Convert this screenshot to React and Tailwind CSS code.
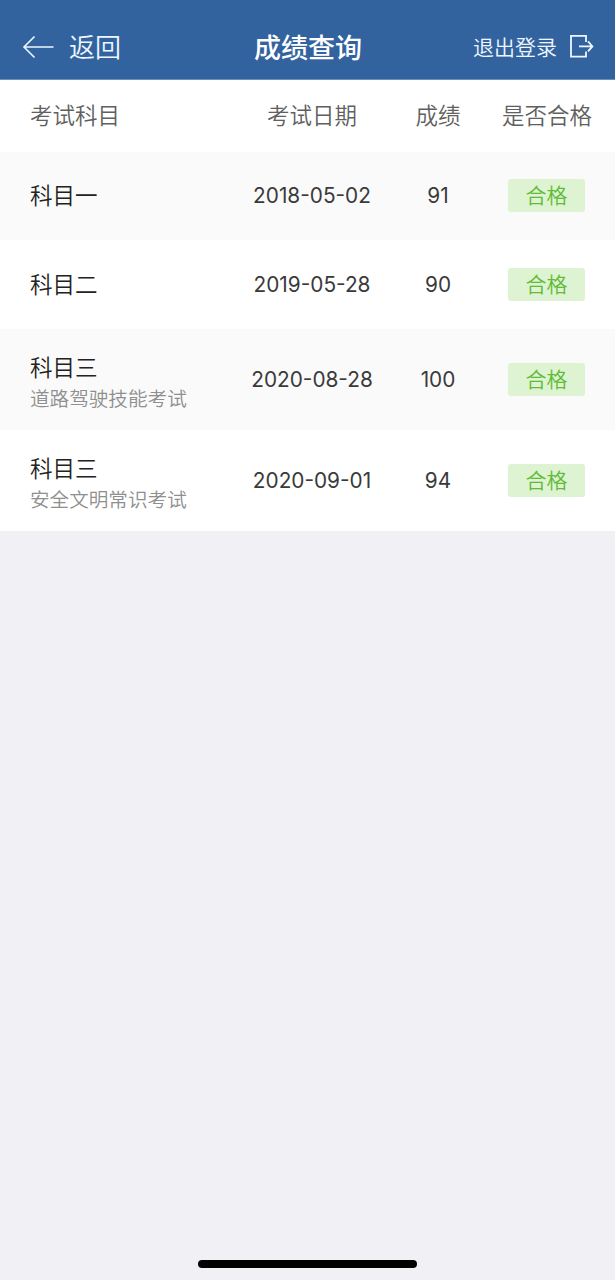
const results = [
  { subject: '科目一', date: '2018-05-02', score: 91 },
  { subject: '科目二', date: '2019-05-28', score: 90 },
  { subject: '科目三', detail: '道路驾驶技能考试', date: '2020-08-28', score: 100 },
  { subject: '科目三', detail: '安全文明常识考试', date: '2020-09-01', score: 94 },
];

function BackIcon() {
  return (
    <svg width="32" height="24" viewBox="0 0 32 24" fill="none" stroke="currentColor" strokeWidth="1.6">
      <path d="M12.5 1.5 2 12l10.5 10.5M2 12h29.5" />
    </svg>
  );
}

function LogoutIcon() {
  return (
    <svg width="25" height="24" viewBox="0 0 25 24" fill="none" stroke="currentColor" strokeWidth="1.8">
      <path d="M17 7V.9H2v20.7h15v-5.1" />
      <path d="M10 11.4h13M19 6.4l4.4 5-4.4 5" />
    </svg>
  );
}

export default function App() {
  return (
    <div className="min-h-screen bg-white">
      <div className="w-[615px] h-screen flex flex-col bg-[#f1f0f5] font-['Inter','Noto_Sans_CJK_SC',sans-serif]">
        <header className="h-[80px] shrink-0 pt-[14px] pl-[22px] pr-[21px] grid grid-cols-[1fr_auto_1fr] items-center bg-[#33639f] border-b border-[#6c90bd] text-[#eef7ff]">
          <button className="flex items-center gap-[15px] text-[26px] leading-none font-[350]">
            <BackIcon />
            <span className="pt-[3px]">返回</span>
          </button>
          <h1 className="pt-[3px] text-[27px] leading-none font-medium text-white">成绩查询</h1>
          <button className="flex items-center justify-end gap-[12px] text-[21px] leading-none font-[350]">
            <span className="pt-px">退出登录</span>
            <LogoutIcon />
          </button>
        </header>

        <main className="text-[22.5px] leading-none font-[350]">
          <div className="h-[71.5px] pt-px grid grid-cols-[236px_152px_100px_117px] items-center text-center text-[#606060] bg-white">
            <span className="pl-[30px] text-left">考试科目</span>
            <span>考试日期</span>
            <span>成绩</span>
            <span className="-mr-px">是否合格</span>
          </div>
          {results.map((r) => (
            <div
              key={r.date}
              className={`${r.detail ? 'h-[101px]' : 'h-[88.75px]'} grid grid-cols-[236px_152px_100px_117px] items-center text-center text-[#3a3a3a] odd:bg-white even:bg-[#fafafa]`}
            >
              <div className={`${r.detail ? 'pt-[8px]' : 'pt-px'} pl-[30px] text-left text-[#222]`}>
                <p>{r.subject}</p>
                {r.detail && <p className="mt-[10px] text-[19.6px] text-[#8f8f8f]">{r.detail}</p>}
              </div>
              <span className="pt-[2px] text-[20.8px] font-normal">{r.date}</span>
              <span className="pt-[2px] text-[20.8px] font-normal">{r.score}</span>
              <span className="w-[77px] h-[33px] mx-auto flex items-center justify-center rounded-[3px] bg-[#def3d1] text-[21px] text-[#5fbb38]">
                合格
              </span>
            </div>
          ))}
        </main>

        {/* Home indicator */}
        <div className="mt-auto mb-[12px] ml-[198px] w-[219px] h-[8px] shrink-0 rounded-full bg-black" />
      </div>
    </div>
  );
}
